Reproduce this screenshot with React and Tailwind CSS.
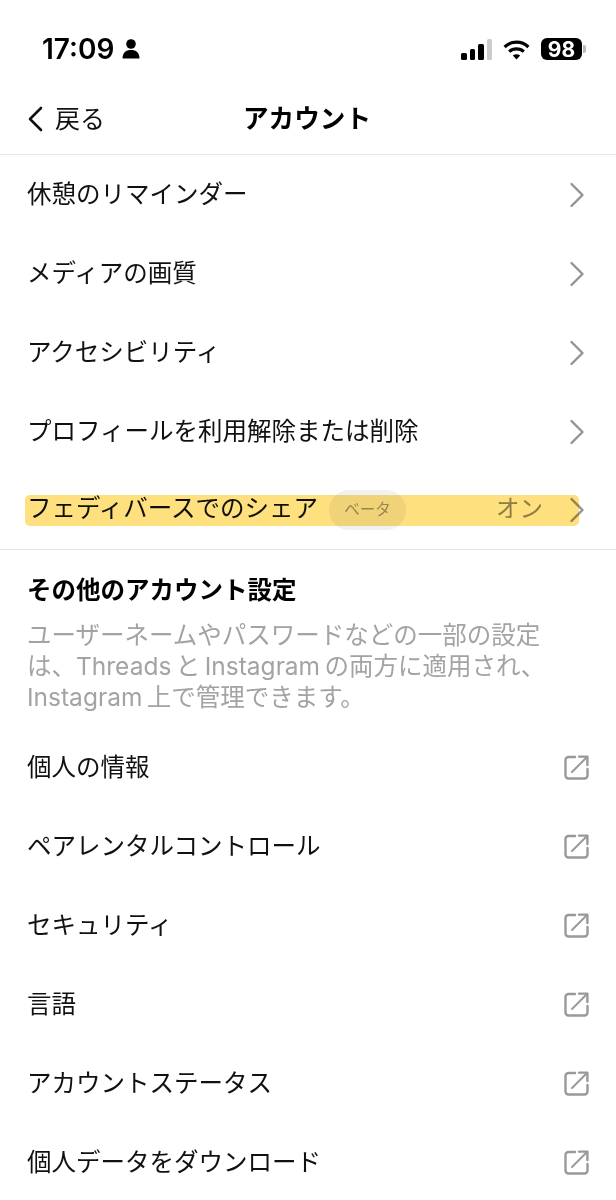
import React from 'react';

const FONT = "font-['Inter','Noto_Sans_CJK_JP',sans-serif]";

const topRows = ['休憩のリマインダー', 'メディアの画質', 'アクセシビリティ', 'プロフィールを利用解除または削除'];
const linkRows = ['個人の情報', 'ペアレンタルコントロール', 'セキュリティ', '言語', 'アカウントステータス', '個人データをダウンロード'];

function Chevron() {
  return (
    <svg width="16" height="26" viewBox="0 0 16 26" fill="none" stroke="#949494" strokeWidth="2.4" strokeLinecap="round" strokeLinejoin="round">
      <path d="M2.5 2 L13.5 13 L2.5 24" />
    </svg>
  );
}

function ExternalIcon() {
  return (
    <svg width="25" height="25" viewBox="0 0 25 25" fill="none" stroke="#999" strokeWidth="2.4" strokeLinecap="round" strokeLinejoin="round">
      <path d="M11 2 H4.5 a3 3 0 0 0 -3 3 V20.5 a3 3 0 0 0 3 3 H20.5 a3 3 0 0 0 3 -3 V14" />
      <path d="M8 17 L23 2" strokeWidth="2" />
      <path d="M15 1.6 H23.4 V10" />
    </svg>
  );
}

function Row({ label, icon, pr }) {
  return (
    <div className={`h-[79px] pl-[27px] flex items-center justify-between ${pr}`}>
      <span className="text-[24.5px] text-[#111]">{label}</span>
      {icon}
    </div>
  );
}

export default function App() {
  return (
    <div className={`w-[616px] h-[1200px] overflow-hidden bg-white ${FONT}`}>
      {/* status bar */}
      <div className="h-[84px] pt-[33px] pl-[42px] pr-[30px] flex items-start justify-between">
        <div className="flex items-center gap-[8px]">
          <span className="text-[28px] leading-[32px] font-semibold text-black">17:09</span>
          <svg width="18" height="20" viewBox="0 0 18 20" fill="black">
            <circle cx="9" cy="5" r="4.8" />
            <path d="M0.5 19.5 C0.5 13.5 4 11 9 11 C14 11 17.5 13.5 17.5 19.5 Z" />
          </svg>
        </div>
        <div className="flex items-center gap-[11px] h-[32px]">
          <div className="flex items-end gap-[3px] h-[21px]">
            <div className="w-[5.5px] h-[7px] rounded-[1.5px] bg-black" />
            <div className="w-[5.5px] h-[11px] rounded-[1.5px] bg-black" />
            <div className="w-[5.5px] h-[16px] rounded-[1.5px] bg-black" />
            <div className="w-[5.5px] h-[21px] rounded-[1.5px] bg-[#ccc]" />
          </div>
          <svg width="27" height="21" viewBox="0 0 27 21" fill="none" stroke="black" strokeWidth="3.2">
            <path d="M1.6 8 C8.2 1.6 18.8 1.6 25.4 8" />
            <path d="M6.2 12.6 C10.2 8.9 16.8 8.9 20.8 12.6" />
            <path d="M13.5 20.5 L9.8 16.4 C11.9 14.7 15.1 14.7 17.2 16.4 Z" fill="black" stroke="none" />
          </svg>
          <div className="flex items-center gap-[1px]">
            <div className="w-[41px] h-[22px] rounded-[6px] bg-black flex items-center justify-center text-white text-[21px] leading-none font-bold">98</div>
            <div className="w-[3px] h-[8px] rounded-r-[2px] bg-[#bbb]" />
          </div>
        </div>
      </div>

      {/* header */}
      <div className="relative h-[71px] border-b border-[#e8e8e8] flex items-center justify-center">
        <div className="absolute left-[27px] top-[21px] flex items-center gap-[12px]">
          <svg width="16" height="26" viewBox="0 0 16 26" fill="none" stroke="#111" strokeWidth="2.6" strokeLinecap="round" strokeLinejoin="round">
            <path d="M14 2 L3 13 L14 24" />
          </svg>
          <span className="text-[25px] leading-[28px] text-[#111]">戻る</span>
        </div>
        <span className="text-[25.6px] font-bold text-black -ml-[2px]">アカウント</span>
      </div>

      {topRows.map((label) => (
        <Row key={label} label={label} icon={<Chevron />} pr="pr-[31px]" />
      ))}

      {/* highlighted row */}
      <div className="relative h-[78px] pl-[27px] pr-[31px] flex items-center justify-between">
        <div className="flex items-center gap-[11px]">
          <span className="text-[24.5px] text-[#111] -mt-[4px]">フェディバースでのシェア</span>
          <span className="w-[77px] h-[40px] rounded-full bg-[#f1f1f3] flex items-center justify-center text-[15.5px] text-[#999]">ベータ</span>
        </div>
        <div className="flex items-center gap-[26px]">
          <span className="text-[23.5px] text-[#8e8e8e] -mt-[2px]">オン</span>
          <Chevron />
        </div>
        <div className="absolute left-[25px] top-[24px] w-[554px] h-[31px] rounded-[5px] bg-[#fee07e] blur-[0.6px] mix-blend-multiply" />
      </div>

      {/* other settings */}
      <div className="border-t border-[#e4e4e4] px-[27px] pt-[24px] pb-[15px]">
        <h2 className="text-[24.5px] leading-[32px] font-bold text-black">その他のアカウント設定</h2>
        <p className="mt-[14px] text-[24.5px] leading-[31px] text-[#a3a3a3]">
          ユーザーネームやパスワードなどの一部の設定
          <br />
          {'は、Threads\u2009と\u2009Instagram\u2009の両方に適用され、'}
          <br />
          {'Instagram\u2009上で管理できます。'}
        </p>
      </div>

      {linkRows.map((label) => (
        <Row key={label} label={label} icon={<ExternalIcon />} pr="pr-[27px]" />
      ))}
    </div>
  );
}
